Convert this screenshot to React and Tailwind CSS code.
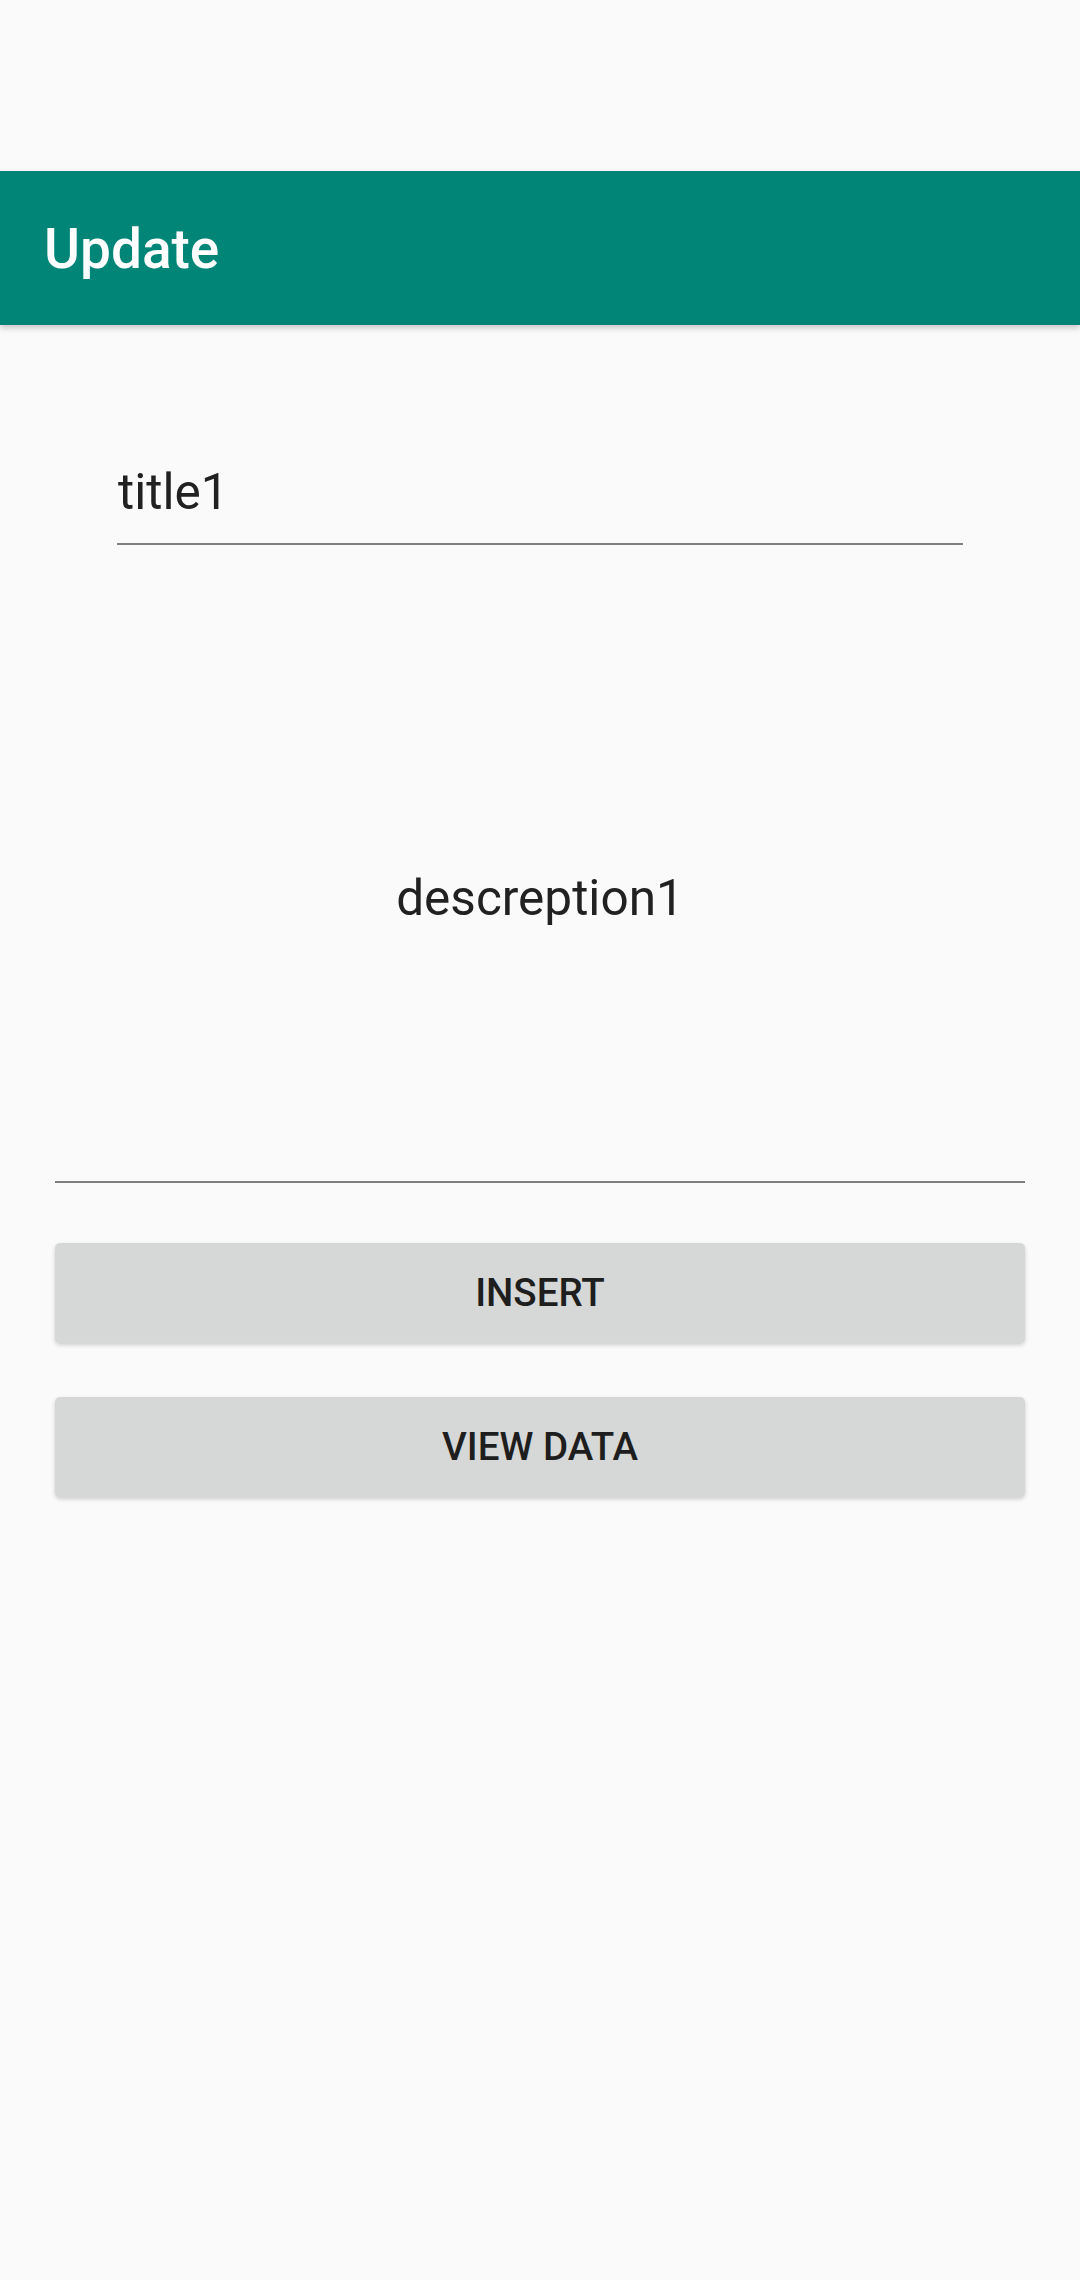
import React from 'react';

const font = { fontFamily: 'Roboto, "Noto Sans", sans-serif' };

const Field = ({ value, className, textClass }) => (
  <div className={`border-b-2 border-[#7f7f7f] ${className}`}>
    <div className={`text-[49.5px] leading-[58px] text-[#212121] ${textClass}`}>{value}</div>
  </div>
);

const Button = ({ label, className }) => (
  <button
    type="button"
    className={`h-[100px] w-full rounded-[5px] bg-[#d6d7d7] text-[38.5px] font-medium text-[#1e1e1e] shadow-[0_2px_4px_rgba(0,0,0,0.18)] flex items-center justify-center ${className}`}
  >
    {label}
  </button>
);

export default function App() {
  return (
    <div className="w-[1080px] h-[2280px] bg-[#fafafa] overflow-hidden" style={font}>
      {/* status bar area */}
      <div className="h-[171px]" />

      {/* app bar */}
      <div className="relative z-10 h-[154px] bg-[#008577] pl-[44px] flex items-center shadow-[0_3px_6px_rgba(0,0,0,0.2)]">
        <span className="text-[55px] font-medium text-white leading-none pt-[2px]">Update</span>
      </div>

      <div className="px-[55px]">
        <Field value="title1" className="mt-[138px] mx-[62px] pb-[22px]" textClass="pl-[1px]" />

        <Field
          value="descreption1"
          className="mt-[324px] pb-[254px]"
          textClass="text-center"
        />

        <Button label="INSERT" className="mt-[60px]" />
        <Button label="VIEW DATA" className="mt-[54px]" />
      </div>
    </div>
  );
}
